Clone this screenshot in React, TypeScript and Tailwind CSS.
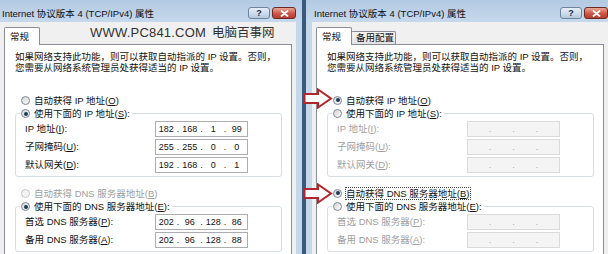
import React from 'react';

type Parts = string[];

const LEFT = {
  ip: ['182', '168', '1', '99'],
  mask: ['255', '255', '0', '0'],
  gw: ['192', '168', '0', '1'],
  dns1: ['202', '96', '128', '86'],
  dns2: ['202', '96', '128', '88'],
};

function Radio({ checked, disabled }: { checked?: boolean; disabled?: boolean }) {
  return (
    <span
      className={`w-[9px] h-[9px] shrink-0 rounded-full border flex items-center justify-center bg-gradient-to-br ${
        disabled ? 'border-[#c6c6c6] from-[#eeeeee] to-[#fafafa]' : 'border-[#7d8894] from-[#d4d4d4] to-[#fdfdfd]'
      }`}
    >
      {checked && <span className="w-[4px] h-[4px] rounded-full bg-[#1f3a58]" />}
    </span>
  );
}

function IpBox({ parts, disabled }: { parts?: Parts; disabled?: boolean }) {
  const p = parts ?? ['', '', '', ''];
  return (
    <div
      className={`w-[93px] h-[16px] border flex items-center text-[9px] leading-[14px] ${
        disabled ? 'bg-[#f4f4f4] border-[#dadada] text-[#a6a6a6]' : 'bg-white border-[#abadb3] text-[#111]'
      }`}
    >
      {p.map((v, i) => (
        <React.Fragment key={i}>
          <span className="flex-1 text-center">{v}</span>
          {i < 3 && <span className="w-[3px] text-center">.</span>}
        </React.Fragment>
      ))}
    </div>
  );
}

function Row({ label, parts, disabled }: { label: React.ReactNode; parts?: Parts; disabled?: boolean }) {
  return (
    <div className="h-[18px] flex items-center pl-[9px]">
      <span className={`w-[130px] ${disabled ? 'text-[#a0a0a0]' : ''}`}>{label}</span>
      <IpBox parts={parts} disabled={disabled} />
    </div>
  );
}

function RadioLabel({
  checked,
  disabled,
  focus,
  children,
}: {
  checked?: boolean;
  disabled?: boolean;
  focus?: boolean;
  children: React.ReactNode;
}) {
  return (
    <span className="flex items-center gap-[3px] h-[13px]">
      <Radio checked={checked} disabled={disabled} />
      <span
        className={`leading-[11px] ${disabled ? 'text-[#a0a0a0]' : ''} ${
          focus ? 'border border-dotted border-[#444]' : 'border border-transparent'
        }`}
      >
        {children}
      </span>
    </span>
  );
}

function HelpBtn() {
  return (
    <div className="w-[22px] h-[12px] rounded-[3px] border border-[#6f849c] bg-gradient-to-b from-[#e6eef8] to-[#b6c9df] flex items-center justify-center text-[9px] leading-none font-bold text-[#1c2f4c]">
      ?
    </div>
  );
}

function CloseBtn() {
  return (
    <div className="w-[24px] h-[12px] rounded-[3px] border border-[#6e2a24] bg-gradient-to-b from-[#e9a898] via-[#cf5a4c] to-[#b8392c] flex items-center justify-center">
      <svg width="9" height="7" viewBox="0 0 9 7">
        <path d="M1.5 1 L7.5 6 M7.5 1 L1.5 6" stroke="#fff" strokeWidth="1.8" strokeLinecap="round" />
      </svg>
    </div>
  );
}

function Dialog({ mode }: { mode: 'manual' | 'auto' }) {
  const manual = mode === 'manual';
  return (
    <div className="w-[312px] h-[270px] shrink-0 flex flex-col border-x-2 border-[#3a5a7c] bg-[#c4d7eb]">
      <div className="h-[22px] shrink-0 flex pl-[8px] pr-[6px] bg-gradient-to-b from-[#b3cae3] to-[#c6d8ec]">
        <span className="mt-[8px] leading-[12px] text-[9.5px] text-[#111]">Internet 协议版本 4 (TCP/IPv4) 属性</span>
        <div className="ml-auto mt-[7px] flex gap-[2px]">
          <HelpBtn />
          <CloseBtn />
        </div>
      </div>

      <div className="flex-1 mx-[6px] bg-[#f0f0f0] px-[4px] pt-[4px] flex flex-col">
        <div className="h-[18px] flex items-end">
          <div className="relative z-[1] w-[36px] h-[18px] -mb-px pl-[5px] pt-[3px] leading-[11px] bg-white border border-b-0 border-[#898c95] rounded-t-[2px]">
            常规
          </div>
          {!manual && (
            <div className="w-[45px] h-[13px] -ml-px pl-[4px] leading-[12px] border border-b-0 border-[#898c95] rounded-t-[2px] bg-gradient-to-b from-[#f6f6f6] to-[#e2e2e2]">
              备用配置
            </div>
          )}
        </div>

        <div className="flex-1 bg-white border border-[#898c95] flex flex-col">
          <p className="pt-[6px] pl-[10px] leading-[11px]">
            如果网络支持此功能，则可以获取自动指派的 IP 设置。否则，
            <br />
            您需要从网络系统管理员处获得适当的 IP 设置。
          </p>

          <div className="mt-[20px] h-[14px] flex items-center pl-[16px]">
            <RadioLabel checked={!manual}>
              自动获得 IP 地址(<u>O</u>)
            </RadioLabel>
          </div>

          <fieldset className="ml-[10px] mr-[9px] border border-[#d5dfe5] rounded-[3px] pb-[2px]">
            <legend className="ml-[4px] px-[1px]">
              <RadioLabel checked={manual}>
                使用下面的 IP 地址(<u>S</u>):
              </RadioLabel>
            </legend>
            <Row label={<>IP 地址(<u>I</u>):</>} parts={manual ? LEFT.ip : undefined} disabled={!manual} />
            <Row label={<>子网掩码(<u>U</u>):</>} parts={manual ? LEFT.mask : undefined} disabled={!manual} />
            <Row label={<>默认网关(<u>D</u>):</>} parts={manual ? LEFT.gw : undefined} disabled={!manual} />
          </fieldset>

          <div className="mt-[9px] h-[14px] flex items-center pl-[16px]">
            <RadioLabel checked={!manual} disabled={manual} focus={!manual}>
              自动获得 DNS 服务器地址(<u>B</u>)
            </RadioLabel>
          </div>

          <fieldset className="ml-[10px] mr-[9px] border border-[#d5dfe5] rounded-[3px] pb-[2px]">
            <legend className="ml-[4px] px-[1px]">
              <RadioLabel checked={manual}>
                使用下面的 DNS 服务器地址(<u>E</u>):
              </RadioLabel>
            </legend>
            <Row label={<>首选 DNS 服务器(<u>P</u>):</>} parts={manual ? LEFT.dns1 : undefined} disabled={!manual} />
            <Row label={<>备用 DNS 服务器(<u>A</u>):</>} parts={manual ? LEFT.dns2 : undefined} disabled={!manual} />
          </fieldset>
        </div>
      </div>
    </div>
  );
}

function Arrow({ top }: { top: number }) {
  return (
    <svg className="absolute left-[303px]" style={{ top }} width="30" height="21" viewBox="0 0 30 21">
      <polygon points="1.5,6 15,6 15,1.5 28,10.5 15,19.5 15,15 1.5,15" fill="#fff" stroke="#b3252b" strokeWidth="2" strokeLinejoin="miter" />
    </svg>
  );
}

export default function App() {
  return (
    <div className="relative w-[608px] h-[254px] overflow-hidden bg-[#c4d7eb] flex items-start font-['Liberation_Sans','Noto_Sans_CJK_SC',sans-serif] text-[9.5px] text-[#111]">
      <div className="-ml-[8px] shrink-0">
        <Dialog mode="manual" />
      </div>
      <Dialog mode="auto" />

      <div className="absolute left-[90px] top-[26px] h-[14px] leading-[14px] flex items-center whitespace-nowrap text-[#333]">
        <span className="text-[13px] tracking-[0.2px]">WWW.PC841.COM</span>
        <span className="ml-[6px] text-[12.5px]">电脑百事网</span>
      </div>

      <Arrow top={88} />
      <Arrow top={183} />
    </div>
  );
}
